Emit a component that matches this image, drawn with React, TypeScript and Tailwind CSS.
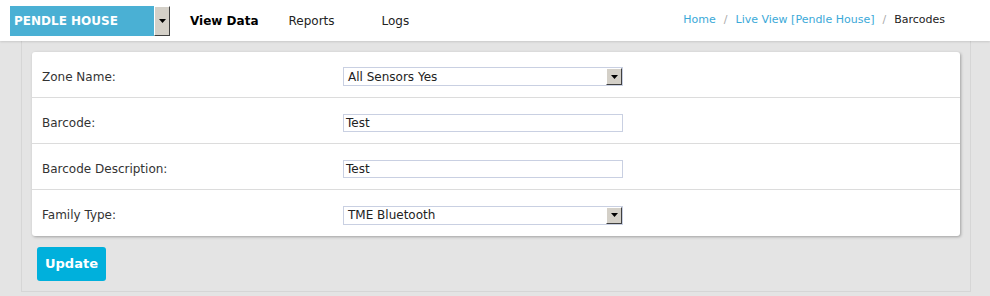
import React from 'react';

const font = { fontFamily: '"DejaVu Sans", Verdana, sans-serif' };

const DropButton: React.FC<{ tall?: boolean }> = ({ tall }) => (
  <div
    className={`flex w-[16px] shrink-0 items-center justify-center bg-[#d4d0c8] border-t border-l border-t-white border-l-white border-r border-b border-r-[#404040] border-b-[#404040] ${tall ? 'h-full' : 'h-[17px]'}`}
  >
    <svg width="7" height="4" viewBox="0 0 7 4">
      <path d="M0 0h7L3.5 4z" fill="#000" />
    </svg>
  </div>
);

const SelectBox: React.FC<{ value: string }> = ({ value }) => (
  <div className="flex h-[19px] w-[280px] items-center border border-[#c9d0e2] bg-white pl-[4px]">
    <span className="flex-1 text-[12px] text-[#222]">{value}</span>
    <DropButton />
  </div>
);

const TextBox: React.FC<{ value: string }> = ({ value }) => (
  <div className="flex h-[18px] w-[280px] items-center border border-[#c9d0e2] bg-white pl-[2px] text-[12px] text-[#222]">
    {value}
  </div>
);

const rows = [
  { label: 'Zone Name:', control: <SelectBox value="All Sensors Yes" /> },
  { label: 'Barcode:', control: <TextBox value="Test" /> },
  { label: 'Barcode Description:', control: <TextBox value="Test" /> },
  { label: 'Family Type:', control: <SelectBox value="TME Bluetooth" /> },
];

export default function App() {
  return (
    <div className="h-[296px] w-[990px] overflow-hidden bg-[#e4e4e4]" style={font}>
      {/* Header */}
      <div className="relative z-10 flex h-[41px] items-center bg-white pl-[10px] pr-[45px] shadow-[0_1px_2px_rgba(0,0,0,0.12)]">
        <div className="flex h-[30px] w-[160px] items-stretch bg-[#4ab0d4]">
          <span className="flex flex-1 items-center pl-[4px] text-[12px] font-bold text-white">PENDLE HOUSE</span>
          <DropButton tall />
        </div>
        <nav className="ml-[20px] flex items-center text-[12px] text-[#222]">
          <span className="font-bold text-black">View Data</span>
          <span className="ml-[30px]">Reports</span>
          <span className="ml-[47px]">Logs</span>
        </nav>
        <div className="ml-auto flex items-center gap-[8px] text-[11px]">
          <span className="text-[#3ba9d8]">Home</span>
          <span className="text-[#aaa]">/</span>
          <span className="text-[#3ba9d8]">Live View [Pendle House]</span>
          <span className="text-[#aaa]">/</span>
          <span className="text-[#222]">Barcodes</span>
        </div>
      </div>

      {/* Outer panel */}
      <div className="ml-[21px] mt-[-1px] w-[950px] border-x border-b border-[#d6d6d6] px-[10px] pb-[10px] pt-[12px]">
        <div className="rounded-[3px] bg-white shadow-[1px_1px_3px_rgba(0,0,0,0.3)]">
          {rows.map((r, i) => (
            <div
              key={r.label}
              className={`flex h-[46px] items-center px-[10px] pt-[4px] ${i < rows.length - 1 ? 'border-b border-[#dcdcdc]' : ''}`}
            >
              <span className="w-[301px] text-[12px] text-[#333]">{r.label}</span>
              {r.control}
            </div>
          ))}
        </div>
        <button className="mt-[11px] ml-[5px] h-[34px] w-[69px] rounded-[3px] bg-[#00b0dc] text-[13px] font-bold text-white">
          Update
        </button>
      </div>
    </div>
  );
}
